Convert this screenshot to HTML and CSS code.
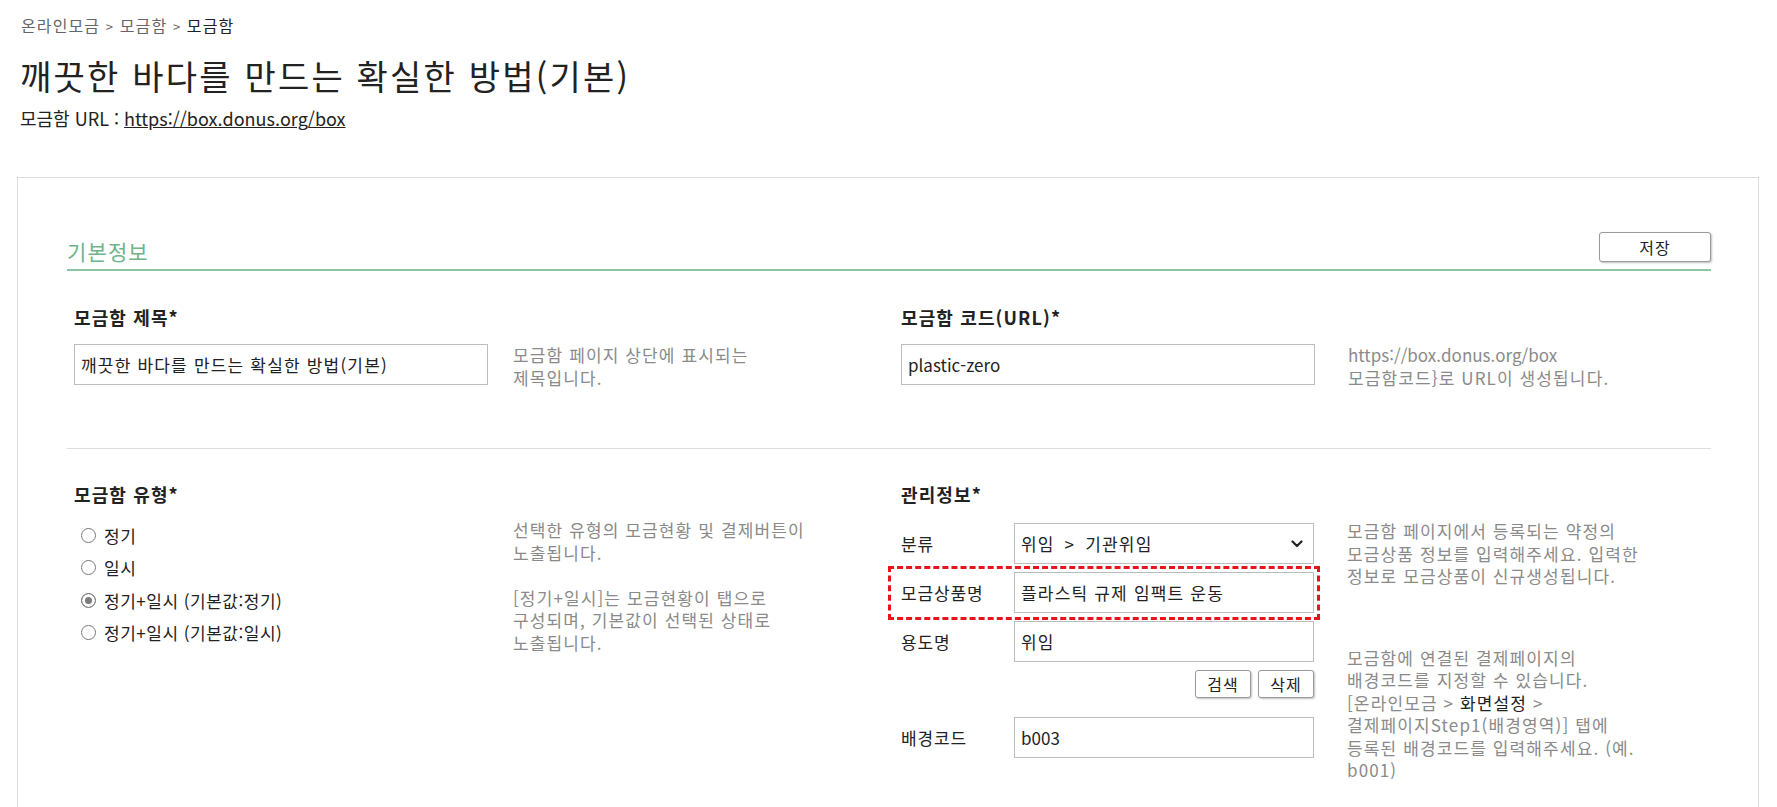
FILE: index.html
```html
<!DOCTYPE html>
<html lang="ko">
<head>
  <meta charset="UTF-8">
  <meta name="viewport" content="width=device-width, initial-scale=1.0">
  <title>모금함</title>
  <link rel="stylesheet" href="styles.css">
</head>
<body>
  <div class="page">
    <div class="breadcrumb">온라인모금 <span class="sep">&gt;</span> 모금함 <span class="sep">&gt;</span> <span class="current">모금함</span></div>
    <h1 class="title">깨끗한 바다를 만드는 확실한 방법(기본)</h1>
    <div class="box-url">모금함 URL : <a href="#">https://box.donus.org/box</a></div>

    <div class="card">
      <!-- 기본정보 -->
      <div class="section-head">
        <h2>기본정보</h2>
        <button class="btn btn-save">저장</button>
      </div>

      <div class="row row-line">
        <div class="field">
          <div class="label">모금함 제목*</div>
          <div class="field-body">
            <input class="text-input" type="text" value="깨끗한 바다를 만드는 확실한 방법(기본)">
            <div class="hint">모금함 페이지 상단에 표시되는<br>제목입니다.</div>
          </div>
        </div>
        <div class="field field-right">
          <div class="label">모금함 코드(URL)*</div>
          <div class="field-body">
            <input class="text-input latin" type="text" value="plastic-zero">
            <div class="hint"><span class="latin">https://box.donus.org/box</span><br>모금함코드}로 URL이 생성됩니다.</div>
          </div>
        </div>
      </div>

      <div class="row">
        <div class="field">
          <div class="label">모금함 유형*</div>
          <div class="field-body field-body-top">
            <div class="radio-list">
              <label class="radio"><input type="radio" name="type"> 정기</label>
              <label class="radio"><input type="radio" name="type"> 일시</label>
              <label class="radio"><input type="radio" name="type" checked> 정기+일시 (기본값:정기)</label>
              <label class="radio"><input type="radio" name="type"> 정기+일시 (기본값:일시)</label>
            </div>
            <div class="hint">
              <p>선택한 유형의 모금현황 및 결제버튼이<br>노출됩니다.</p>
              <p>[정기+일시]는 모금현황이 탭으로<br>구성되며, 기본값이 선택된 상태로<br>노출됩니다.</p>
            </div>
          </div>
        </div>
        <div class="field field-right">
          <div class="label">관리정보*</div>
          <div class="field-body field-body-top">
            <div class="manage">
              <div class="sub-row">
                <span class="sub-label">분류</span>
                <span class="select-wrap">
                  <select class="select">
                    <option>위임 &gt; 기관위임</option>
                  </select>
                  <svg class="chevron" width="12" height="8" viewBox="0 0 12 8"><path d="M1.5 1.5 L6 6 L10.5 1.5" fill="none" stroke="#222" stroke-width="2.2" stroke-linecap="round" stroke-linejoin="round"/></svg>
                </span>
              </div>
              <div class="sub-row">
                <span class="sub-label">모금상품명</span>
                <input class="text-input sub-input" type="text" value="플라스틱 규제 임팩트 운동">
                <span class="mark"></span>
              </div>
              <div class="sub-row">
                <span class="sub-label">용도명</span>
                <input class="text-input sub-input" type="text" value="위임">
              </div>
              <div class="sub-buttons">
                <button class="btn btn-small">검색</button>
                <button class="btn btn-small">삭제</button>
              </div>
              <div class="sub-row sub-row-bg">
                <span class="sub-label">배경코드</span>
                <input class="text-input sub-input latin" type="text" value="b003">
              </div>
            </div>
            <div class="hint hint-right">
              <p>모금함 페이지에서 등록되는 약정의<br>모금상품 정보를 입력해주세요. 입력한<br>정보로 모금상품이 신규생성됩니다.</p>
              <p class="hint-bg">모금함에 연결된 결제페이지의<br>배경코드를 지정할 수 있습니다.<br>[온라인모금 &gt; <b>화면설정</b> &gt;<br>결제페이지Step1(배경영역)] 탭에<br>등록된 배경코드를 입력해주세요. (예.<br>b001)</p>
            </div>
          </div>
        </div>
      </div>
    </div>
  </div>
</body>
</html>
```

FILE: styles.css
```css
html, body {
  overflow: hidden;
}

body {
  margin: 0;
  font-family: "Noto Sans CJK KR", "Noto Sans", sans-serif;
  color: #222;
  background: #fff;
  letter-spacing: 0.07em;
}

.latin {
  letter-spacing: 0;
}

.page {
  padding: 15px 18px 0 17px;
}

/* 상단 */
.breadcrumb {
  padding-left: 4px;
  font-size: 16px;
  line-height: 20px;
  color: #666;
}

.breadcrumb .sep {
  font-size: 13px;
}

.breadcrumb .current {
  color: #222;
}

.title {
  margin: 17px 0 0 3px;
  font-size: 34px;
  font-weight: 400;
  line-height: 44px;
  letter-spacing: 0.065em;
}

.box-url {
  margin: 8px 0 0 3px;
  font-size: 18px;
  line-height: 24px;
  letter-spacing: 0;
}

.box-url a {
  color: #222;
}

/* 카드 */
.card {
  margin-top: 47px;
  padding: 54px 47px 60px 49px;
  border: 1px solid #ddd;
  border-bottom: none;
}

.section-head {
  display: flex;
  justify-content: space-between;
  align-items: flex-end;
  padding-bottom: 7px;
  border-bottom: 2px solid #8dc6a4;
}

.section-head h2 {
  margin: 0;
  font-size: 21px;
  font-weight: 400;
  line-height: 22px;
  color: #6db38b;
}

.btn {
  font-family: inherit;
  font-size: 16px;
  letter-spacing: 0.07em;
  color: #222;
  background: #fff;
  border: 1px solid #9a9a9a;
  border-radius: 3px;
  box-shadow: 1px 1px 2px rgba(0, 0, 0, .25);
  padding: 0;
  cursor: pointer;
}

.btn-save {
  width: 112px;
  height: 30px;
}

.row {
  display: grid;
  grid-template-columns: 827px 1fr;
  padding-top: 34px;
}

.row-line {
  padding-bottom: 59px;
  border-bottom: 1px solid #ddd;
}

.row-line + .row {
  padding-top: 33px;
}

.field {
  padding-left: 7px;
}

.label {
  font-size: 18px;
  font-weight: 700;
  line-height: 24px;
}

.field-body {
  display: flex;
  align-items: flex-start;
  margin-top: 15px;
}

.field-body-top {
  margin-top: 13px;
}

.text-input {
  width: 414px;
  height: 41px;
  box-sizing: border-box;
  padding: 0 6px;
  font-family: inherit;
  font-size: 17px;
  letter-spacing: 0.07em;
  color: #222;
  border: 1px solid #bdbdbd;
  outline: none;
}

.text-input.latin {
  letter-spacing: 0;
}

.hint {
  margin-left: 25px;
  font-size: 17px;
  line-height: 22.5px;
  color: #8a8a8a;
}

.field-right .hint {
  margin-left: 33px;
}

.hint p {
  margin: 0;
}

.hint p + p {
  margin-top: 22.5px;
}

.hint b {
  font-weight: 400;
  color: #222;
}

.hint-right {
  margin-top: 1px;
}

.hint-right .hint-bg {
  margin-top: 59px;
}

/* 라디오 */
.radio-list {
  width: 414px;
  padding-left: 7px;
  box-sizing: border-box;
}

.radio {
  display: flex;
  align-items: center;
  height: 32.5px;
  font-size: 17px;
  letter-spacing: 0.03em;
}

.radio input {
  appearance: none;
  width: 15px;
  height: 15px;
  margin: 0 8px 0 0;
  border: 1px solid #7a7a7a;
  border-radius: 50%;
  background: #fff;
}

.radio input:checked {
  background: #7d7d7d;
  box-shadow: inset 0 0 0 3px #fff;
}

/* 관리정보 */
.manage {
  width: 413px;
  flex-shrink: 0;
  margin-top: 4px;
}

.sub-row {
  position: relative;
  display: flex;
  align-items: center;
  margin-bottom: 8px;
}

.sub-label {
  width: 113px;
  font-size: 17px;
  letter-spacing: 0.05em;
}

.sub-input {
  width: 300px;
}

.select-wrap {
  position: relative;
  display: block;
}

.select {
  appearance: none;
  width: 300px;
  height: 41px;
  padding: 0 30px 0 6px;
  font-family: inherit;
  font-size: 17px;
  letter-spacing: 0.07em;
  word-spacing: 4px;
  color: #222;
  background: #fff;
  border: 1px solid #bdbdbd;
  border-radius: 0;
  outline: none;
}

.chevron {
  position: absolute;
  right: 11px;
  top: 17px;
  pointer-events: none;
}

/* 강조 표시 */
.mark {
  position: absolute;
  top: -6px;
  left: -13px;
  right: -6px;
  bottom: -7px;
  border: 3px dashed #e8141b;
  pointer-events: none;
}

.sub-buttons {
  display: flex;
  justify-content: flex-end;
  gap: 7px;
  margin-top: 1px;
}

.btn-small {
  width: 56px;
  height: 28px;
}

.sub-row-bg {
  margin-top: 19px;
}
```
